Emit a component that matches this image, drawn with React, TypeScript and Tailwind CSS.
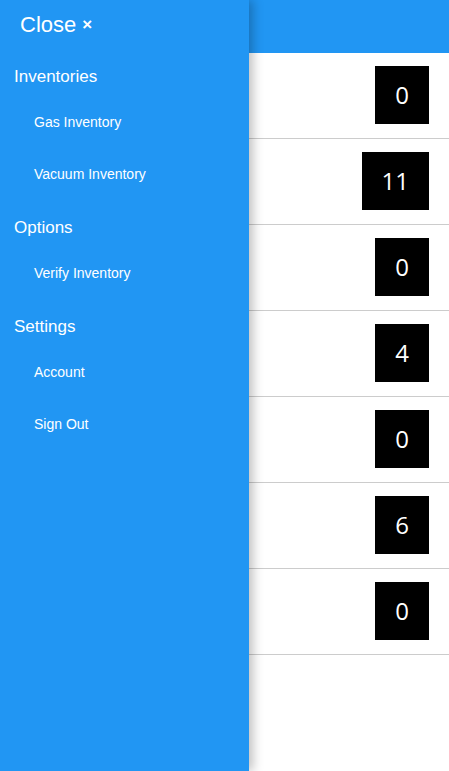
import React from "react"

const counts = [0, 11, 0, 4, 0, 6, 0]

const menu = [
  { title: "Inventories", items: ["Gas Inventory", "Vacuum Inventory"] },
  { title: "Options", items: ["Verify Inventory"] },
  { title: "Settings", items: ["Account", "Sign Out"] },
]

export default function App() {
  return (
    <div
      className="relative h-[771px] w-full overflow-hidden bg-white"
      style={{ fontFamily: '"Liberation Sans", Arial, sans-serif' }}
    >
      <div className="h-[53px] bg-[#2196F3]" />
      <div className="flex flex-col">
        {counts.map((n, i) => (
          <div key={i} className="flex h-[86px] items-start justify-end border-b border-[#cccccc] pt-[13px] pr-5">
            <div
              className="flex h-[58px] min-w-[54px] items-center justify-center bg-black px-5 text-[24px] text-white"
              style={{ fontFamily: '"Open Sans", sans-serif' }}
            >
              {n}
            </div>
          </div>
        ))}
      </div>

      <aside className="absolute inset-y-0 left-0 w-[249px] bg-[#2196F3] text-white shadow-[4px_0_10px_rgba(0,0,0,0.25)]">
        <div className="flex h-[49px] items-center pl-5 text-[22px]">
          Close <span className="ml-1.5 text-[17px] font-bold">×</span>
        </div>
        {menu.map((section) => (
          <div key={section.title}>
            <div className="pt-[18px] pb-[9px] pl-[14px] text-[17px] leading-[20px]">{section.title}</div>
            {section.items.map((item) => (
              <div key={item} className="flex h-[52px] items-center pl-[34px] text-[14px]">
                {item}
              </div>
            ))}
          </div>
        ))}
      </aside>
    </div>
  )
}
